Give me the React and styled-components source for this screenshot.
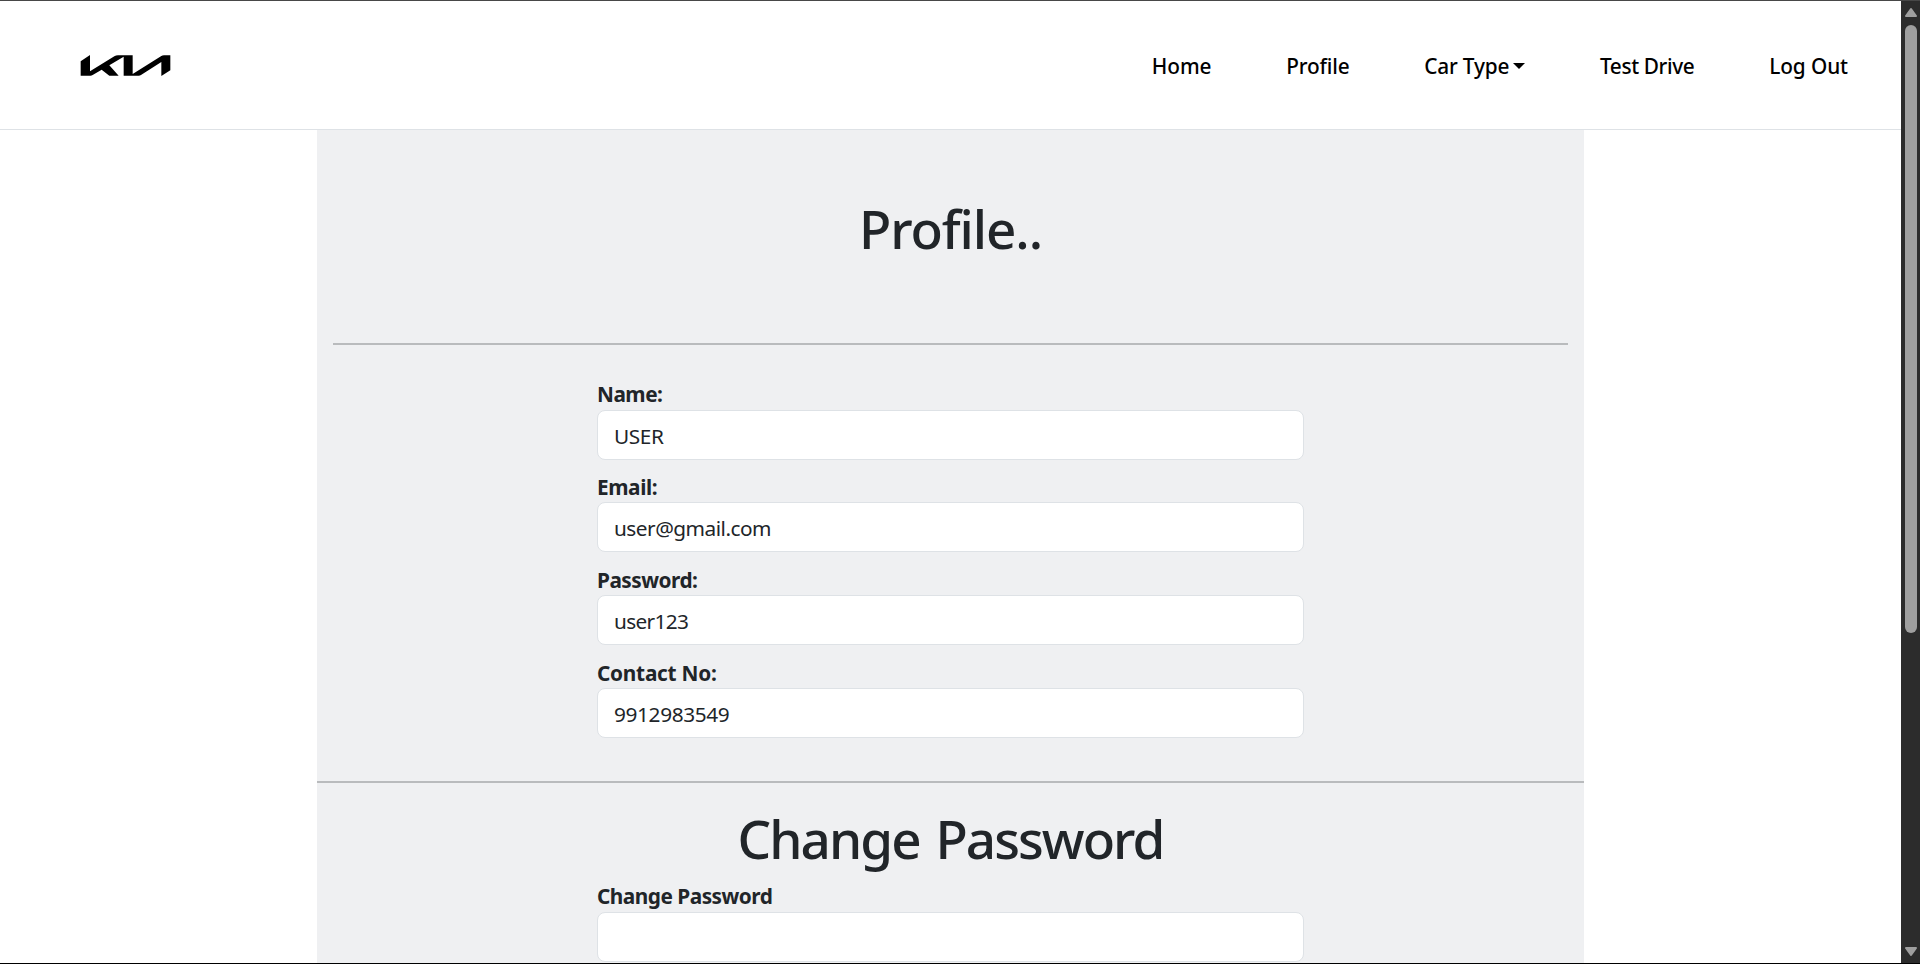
import React from 'react';
import styled, { createGlobalStyle } from 'styled-components';

const GlobalStyle = createGlobalStyle`
  *, *::before, *::after { box-sizing: border-box; }
  html, body { margin: 0; overflow: hidden; }
  body {
    font-family: 'Noto Sans', 'Open Sans', sans-serif;
    font-size: 20.8px;
    color: #212529;
    background: #fff;
  }
`;

const Window = styled.div`
  display: flex;
  width: 1920px;
  height: 964px;
  overflow: hidden;
  border-top: 1px solid #474747;
  border-bottom: 1px solid #000;
`;

const Page = styled.div`
  display: flex;
  flex-direction: column;
  width: 1901px;
  height: 962px;
  overflow: hidden;
`;

const Header = styled.header`
  display: flex;
  flex: none;
  align-items: center;
  justify-content: space-between;
  height: 129px;
  padding: 0 53px 0 80px;
  border-bottom: 1px solid #dee2e6;
`;

const Logo = styled.svg`
  display: block;
  width: 91px;
  height: 22px;
`;

const Nav = styled.nav`
  display: flex;
  gap: 74.7px;
  padding-top: 2px;
`;

const NavLink = styled.a`
  display: flex;
  align-items: center;
  color: #000;
  font-weight: 500;
  line-height: 30px;
  white-space: nowrap;
  letter-spacing: ${(p) => p.$tracking || 0}px;
`;

const Caret = styled.span`
  margin: -1px 0 0 4px;
  border: 6px solid transparent;
  border-top-color: #000;
  border-bottom: 0;
`;

const Panel = styled.main`
  display: flex;
  flex: 1;
  flex-direction: column;
  width: 1267px;
  margin: 0 auto;
  background: #eff0f2;
`;

const Title = styled.h1`
  margin: 0;
  padding-top: ${(p) => p.$top}px;
  height: ${(p) => p.$height}px;
  font-size: 53px;
  font-weight: 500;
  line-height: 64px;
  text-align: center;
  letter-spacing: ${(p) => p.$tracking}px;
  word-spacing: 4px;
`;

const Rule = styled.hr`
  flex: none;
  width: ${(p) => (p.$inset ? 'auto' : '100%')};
  height: 2px;
  margin: 0 ${(p) => (p.$inset ? 16 : 0)}px;
  border: 0;
  background: #b9bbbd;
`;

const Form = styled.form`
  display: flex;
  flex-direction: column;
  flex: none;
  width: 707px;
  height: ${(p) => p.$height}px;
  padding-top: ${(p) => p.$top}px;
  margin-left: 280px;
`;

const Field = styled.div`
  display: flex;
  flex: none;
  flex-direction: column;
  height: 92.8px;
`;

const Label = styled.label`
  height: 31px;
  padding-top: ${(p) => (p.$flush ? 0 : 0.7)}px;
  font-weight: 700;
  line-height: 31px;
  letter-spacing: ${(p) => p.$tracking}px;
`;

const Input = styled.input`
  height: 50px;
  padding: 2px 16px 0;
  border: 1px solid #dee2e6;
  border-radius: 8px;
  background: #fff;
  color: #212529;
  font: inherit;
  letter-spacing: ${(p) => p.$tracking || 0}px;
  outline: 0;
`;

const Scrollbar = styled.div`
  display: flex;
  flex-direction: column;
  align-items: center;
  justify-content: space-between;
  width: 19px;
  padding: 6px 0 6px 1px;
  background: #2c2c2c;
`;

const Thumb = styled.div`
  width: 12px;
  height: 608px;
  margin: 8px 0 auto;
  border-radius: 6px;
  background: #9f9f9f;
`;

const Arrow = styled.svg`
  display: block;
  width: 12px;
  height: 10px;
  transform: ${(p) => (p.$down ? 'rotate(180deg)' : 'none')};
`;

const links = [
  { text: 'Home', tracking: -0.05 },
  { text: 'Profile', tracking: -0.15 },
  { text: 'Car Type', tracking: -0.16, menu: true },
  { text: 'Test Drive', tracking: -0.37 },
  { text: 'Log Out', tracking: -0.08 },
];

const fields = [
  { label: 'Name:', labelTracking: -0.5, value: 'USER', tracking: -0.4 },
  { label: 'Email:', labelTracking: -0.4, value: 'user@gmail.com', tracking: -0.5 },
  { label: 'Password:', labelTracking: -0.5, value: 'user123', tracking: -0.65 },
  { label: 'Contact No:', labelTracking: -0.25, value: '9912983549', tracking: -0.36 },
];

const ArrowIcon = ({ down }) => (
  <Arrow $down={down} viewBox="0 0 12 10">
    <path d="M6 2 L11 9 H1 Z" fill="#9f9f9f" stroke="#9f9f9f" strokeWidth="2" strokeLinejoin="round" />
  </Arrow>
);

export default function App() {
  return (
    <>
      <GlobalStyle />
      <Window>
        <Page>
          <Header>
            <Logo viewBox="60 72 273 66" aria-label="Kia">
              <path d="M62 94 L90 75 V124 L163 79 Q168 76 174 76 H218 V132 L304 78 Q307 76 312 76 H331 V121 L304 138 V96 L243 135 Q240 137 236 137 H191 V80 L148 106 L176 137 H148 L125 119 L98 135 Q95 137 91 137 H62 Z" />
            </Logo>
            <Nav>
              {links.map((l) => (
                <NavLink key={l.text} $tracking={l.tracking}>
                  {l.text}
                  {l.menu && <Caret />}
                </NavLink>
              ))}
            </Nav>
          </Header>
          <Panel>
            <Title $top={67} $height={213} $tracking={-1.1}>Profile..</Title>
            <Rule $inset />
            <Form $top={33.6} $height={436}>
              {fields.map((f) => (
                <Field key={f.label}>
                  <Label $tracking={f.labelTracking}>{f.label}</Label>
                  <Input $tracking={f.tracking} defaultValue={f.value} />
                </Field>
              ))}
            </Form>
            <Rule />
            <Title $top={24} $height={98} $tracking={-1.95}>Change Password</Title>
            <Form $top={0} $height={81}>
              <Field>
                <Label $flush $tracking={-0.5}>Change Password</Label>
                <Input />
              </Field>
            </Form>
          </Panel>
        </Page>
        <Scrollbar>
          <ArrowIcon />
          <Thumb />
          <ArrowIcon down />
        </Scrollbar>
      </Window>
    </>
  );
}
